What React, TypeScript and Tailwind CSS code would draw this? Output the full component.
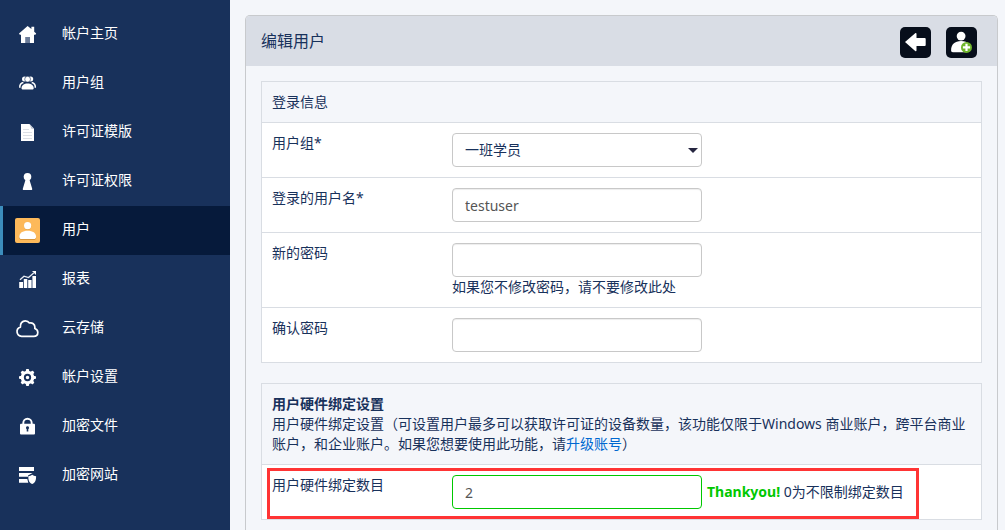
import type { ReactNode } from "react";

const navItems: { label: string; href: string; icon: ReactNode; active?: boolean }[] = [
  {
    label: "帐户主页",
    href: "/home",
    icon: (
      <>
        <path fill="#fff" d="M12.6 4 4 11.6l.8 1.2H6V21h13v-8.200h1.400l.8-1.200-2-1.900V4.800H16.400v2.300z" />
        <path fill="#6b7b98" d="M10.200 15h4.800v6h-4.800z" />
      </>
    ),
  },
  {
    label: "用户组",
    href: "/groups",
    icon: (
      <>
        <circle cx="9.500" cy="8" r="2.500" fill="#fff" />
        <circle cx="15.700" cy="8" r="2.500" fill="#fff" />
        <circle cx="12.600" cy="8.200" r="2.900" fill="#fff" stroke="#18315b" strokeWidth=".6" />
        <path fill="none" stroke="#fff" strokeWidth="1.500" d="M8.400 11.600c-2.400.6-3.800 2.500-3.600 5.200M16.700 11.600c2.400.6 3.800 2.500 3.600 5.200" />
        <path fill="#fff" d="M6.500 17.200c0-3 2.600-4.700 6.100-4.700s6.100 1.700 6.100 4.700c0 .9-.7 1.300-1.500 1.300H8c-.8 0-1.500-.4-1.500-1.300z" />
      </>
    ),
  },
  {
    label: "许可证模版",
    href: "/templates",
    icon: (
      <>
        <path fill="#fff" d="M6 4h8.500L19 8.700V21H6z" />
        <path fill="#b9c1cf" d="M14.500 4 19 8.700h-2.500z" />
        <path stroke="#dcdfe5" d="M8 9.500h6M8 12.500h9M8 15.500h9M8 18.500h9" />
      </>
    ),
  },
  {
    label: "许可证权限",
    href: "/permissions",
    icon: (
      <>
        <circle cx="12.500" cy="7.800" r="3.800" fill="#fff" />
        <path fill="#fff" d="M10.700 10h3.600l1 3.500 1.900 6.300c.2.800-.2 1.200-.9 1.200H8.700c-.7 0-1.100-.4-.9-1.200l1.900-6.300z" />
      </>
    ),
  },
  {
    label: "用户",
    href: "/users",
    active: true,
    icon: (
      <>
        <rect width="25" height="25" rx="2" fill="#fdb95a" />
        <path fill="#c98a36" d="M4.300 19.500c0-3.900 3.300-6.100 8.400-6.100s8.400 2.200 8.400 6.100c0 1.500-.9 2.300-2.300 2.300H6.600c-1.400 0-2.300-.8-2.300-2.300z" />
        <circle cx="12.600" cy="8.200" r="3.600" fill="#d9983f" />
        <circle cx="12.600" cy="7.700" r="3.600" fill="#fff" />
        <path fill="#fff" d="M4.300 18.700c0-3.800 3.300-6 8.400-6s8.400 2.200 8.400 6c0 1.500-.9 2.300-2.300 2.300H6.600c-1.400 0-2.300-.8-2.300-2.300z" />
      </>
    ),
  },
  {
    label: "报表",
    href: "/reports",
    icon: (
      <>
        <path fill="#fff" d="M4.200 15H8v6H4.200zM8.800 12h3.500v9H8.800zM13.200 13h3.400v8h-3.400zM17.400 9H21v12h-3.600z" />
        <path fill="none" stroke="#e8ecf3" strokeWidth="1.300" d="m5 12.800 4-3.600 4.500 1.400 5.200-4.700" />
        <path fill="#fff" d="M17 4h4v4z" />
      </>
    ),
  },
  {
    label: "云存储",
    href: "/cloud",
    icon: (
      <path
        fill="none"
        stroke="#fff"
        strokeWidth="1.700"
        strokeLinejoin="round"
        d="M6.600 20.300a4.700 4.700 0 0 1-1.200-9.200C5 7.600 7.200 4.800 10.300 4.800c2 0 3.300.9 4.100 2.200 2.900-.7 5.500 1.200 5.500 4.300 0 .4 0 .8-.1 1.200 1.900.6 3 2.100 3 3.900 0 2.300-1.700 3.900-4.100 3.900z"
      />
    ),
  },
  {
    label: "帐户设置",
    href: "/settings",
    icon: (
      <>
        <g fill="#fff">
          <circle cx="12.500" cy="12.500" r="6.800" />
          <rect x="10.900" y="4" width="3.200" height="17" rx="1" />
          <rect x="10.900" y="4" width="3.200" height="17" rx="1" transform="rotate(45 12.500 12.500)" />
          <rect x="10.900" y="4" width="3.200" height="17" rx="1" transform="rotate(90 12.500 12.500)" />
          <rect x="10.900" y="4" width="3.200" height="17" rx="1" transform="rotate(135 12.500 12.500)" />
        </g>
        <circle cx="12.500" cy="12.500" r="2.700" fill="#fff" stroke="#18315b" strokeWidth="1.900" />
      </>
    ),
  },
  {
    label: "加密文件",
    href: "/files",
    icon: (
      <>
        <path fill="none" stroke="#fff" strokeWidth="1.900" d="M8.300 10.500V9a4.200 4.200 0 0 1 8.400 0v1.500" />
        <rect x="5" y="9.800" width="15" height="10.700" rx="1" fill="#fff" />
        <path fill="#18315b" d="M12.500 12.300a1.500 1.500 0 0 1 .8 2.800v2.400h-1.600v-2.400a1.500 1.500 0 0 1 .8-2.800z" />
      </>
    ),
  },
  {
    label: "加密网站",
    href: "/sites",
    icon: (
      <>
        <path fill="#fff" d="M4 4h15v3.900H4zM4 10h13.500l-4.500 2.500v1.300H4zM4 16h8.300l1 3.700H4z" />
        <path fill="#fff" d="M17.200 11.800c1 .8 2.400 1.300 3.900 1.400 0 3.800-.6 6.400-3.900 7.900-3.300-1.500-3.900-4.100-3.900-7.900 1.500-.1 2.900-.6 3.900-1.400z" />
      </>
    ),
  },
];

const inputClass =
  "block h-[34px] w-[250px] rounded border border-[#c8c8c8] bg-white px-3 text-sm text-[#555] shadow-[inset_0_1px_1px_rgba(0,0,0,0.075)] outline-none";

function Row({ id, label, children }: { id: string; label: string; children: ReactNode }) {
  return (
    <div className="relative flex border-t border-[#d9dde3] bg-white p-[10px]">
      <label htmlFor={id} className="w-[180px] shrink-0">
        {label}
      </label>
      <div>{children}</div>
    </div>
  );
}

export default function App() {
  return (
    <div className="flex min-h-screen bg-[#f4f6fa] font-['Noto_Sans','Noto_Sans_CJK_SC',sans-serif] text-sm leading-5 text-[#18315b]">
      {/* Sidebar */}
      <nav className="w-[230px] shrink-0 bg-[#18315b] pt-[10px]">
        <ul>
          {navItems.map((item) => (
            <li key={item.href}>
              <a
                href={item.href}
                className={
                  item.active
                    ? "flex h-[49px] items-center gap-[22px] border-l-3 border-[#3c8dbc] bg-[#061a3b] pl-3 text-white"
                    : "flex h-[49px] items-center gap-[22px] border-l-3 border-transparent pl-3 text-white"
                }
              >
                <svg width="25" height="25" viewBox="0 0 25 25" aria-hidden="true">
                  {item.icon}
                </svg>
                <span className="pb-1">{item.label}</span>
              </a>
            </li>
          ))}
        </ul>
      </nav>

      {/* Content */}
      <main className="flex min-w-0 flex-1 flex-col pt-[15px] pr-[7px] pl-[15px]">
        <div className="flex-1 rounded-t-[5px] border border-b-0 border-[#c8cacd]">
          <header className="flex justify-between rounded-t bg-[#d9dde5] pt-[11px] pr-5 pb-2 pl-[15px]">
            <h1 className="text-base leading-7">编辑用户</h1>
            <div className="flex gap-[15px]">
              <button type="button" aria-label="返回" className="rounded-[5px] bg-[#070e1b]">
                <svg width="31" height="31" viewBox="0 0 31 31">
                  <path fill="#fff" d="M5 15 15.200 6.300c.8-.6 1.300-.3 1.300.6V11h8c.8 0 1.200.4 1.200 1.200v5.600c0 .8-.4 1.200-1.200 1.200h-8v4.300c0 .9-.5 1.200-1.300.6z" />
                </svg>
              </button>
              <button type="button" aria-label="添加用户" className="rounded-[5px] bg-[#070e1b]">
                <svg width="31" height="31" viewBox="0 0 31 31">
                  <circle cx="15.100" cy="9.100" r="4.400" fill="#fff" />
                  <path fill="#fff" d="M5.100 23.600c0-6 3.600-9.500 10-9.500 3.500 0 6.300 1.100 8 3.200l-3 8H6.900c-1.200 0-1.800-.5-1.800-1.700z" />
                  <circle cx="20.500" cy="20.400" r="5.500" fill="#6fb52c" />
                  <path stroke="#fff" strokeWidth="2.200" d="M20.500 16.800V24M16.900 20.400h7.200" />
                </svg>
              </button>
            </div>
          </header>

          <form className="flex flex-col gap-5 px-[15px] pt-[15px] pb-2">
            <section className="border border-[#d9dde3]">
              <h2 className="p-[10px]">登录信息</h2>
              <Row id="group" label="用户组*">
                <div className="relative">
                  <select
                    id="group"
                    className="block h-[34px] w-[250px] appearance-none rounded border border-[#c8c8c8] bg-white px-3 text-sm text-[#18315b] outline-none"
                  >
                    <option>一班学员</option>
                  </select>
                  <svg
                    width="10"
                    height="5"
                    viewBox="0 0 10 5"
                    className="pointer-events-none absolute top-[15px] right-1"
                    aria-hidden="true"
                  >
                    <path fill="#252540" d="M0 0h10L5 5z" />
                  </svg>
                </div>
              </Row>
              <Row id="username" label="登录的用户名*">
                <input id="username" type="text" defaultValue="testuser" className={inputClass} />
              </Row>
              <Row id="password" label="新的密码">
                <input id="password" type="password" className={inputClass} />
                <p>如果您不修改密码，请不要修改此处</p>
              </Row>
              <Row id="confirm" label="确认密码">
                <input id="confirm" type="password" className={inputClass} />
              </Row>
            </section>

            <section className="border border-[#d9dde3]">
              <div className="p-[10px]">
                <h2 className="font-bold">用户硬件绑定设置</h2>
                <p>
                  用户硬件绑定设置（可设置用户最多可以获取许可证的设备数量，该功能仅限于Windows 商业账户，跨平台商业账户，和企业账户。如果您想要使用此功能，请
                  <a href="/upgrade" className="text-[#0068d0]">升级账号</a>）
                </p>
              </div>
              <Row id="devices" label="用户硬件绑定数目">
                <div className="flex items-center gap-[5px]">
                  <input
                    id="devices"
                    type="text"
                    defaultValue="2"
                    className="block h-[34px] w-[250px] rounded border border-[#00c800] bg-white px-3 text-sm text-[#555] outline-none"
                  />
                  <p>
                    <strong className="font-bold text-[#00c800]">Thankyou!</strong> 0为不限制绑定数目
                  </p>
                </div>
                {/* Highlight frame */}
                <div className="pointer-events-none absolute top-[3px] left-[5px] h-[51px] w-[652px] border-3 border-[#ff3434]" />
              </Row>
            </section>
          </form>
        </div>
      </main>
    </div>
  );
}
